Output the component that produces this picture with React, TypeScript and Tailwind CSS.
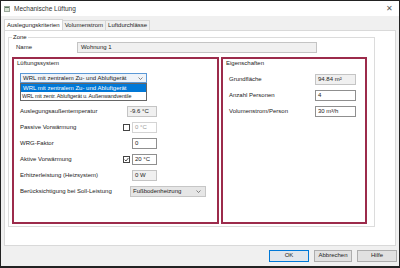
import React from "react";

const font = { fontFamily: '"Liberation Sans", Arial, sans-serif' };

function Input({ value, gray, disabled, w }: { value: string; gray?: boolean; disabled?: boolean; w: string }) {
  const cls = gray
    ? "bg-[#f0f0f0] border-[#c4c4c4] text-[#222]"
    : disabled
    ? "bg-white border-[#d4d4d4] text-[#9a9a9a]"
    : "bg-white border-[#8f8f8f] text-[#222]";
  return (
    <div className={`${w} h-[11px] border ${cls} flex items-center pl-[2px] leading-none whitespace-nowrap`}>{value}</div>
  );
}

function Check({ checked }: { checked?: boolean }) {
  return (
    <div className="w-[7px] h-[7px] border border-[#444] bg-white flex items-center justify-center">
      {checked && (
        <svg width="5" height="5" viewBox="0 0 5 5">
          <path d="M0.6 2.6 L2 4 L4.4 1" stroke="#222" strokeWidth="0.8" fill="none" />
        </svg>
      )}
    </div>
  );
}

function Chevron() {
  return (
    <svg width="5" height="3" viewBox="0 0 5 3">
      <path d="M0.5 0.5 L2.5 2.5 L4.5 0.5" stroke="#555" strokeWidth="0.7" fill="none" />
    </svg>
  );
}

export default function App() {
  return (
    <div
      className="w-[400px] h-[268px] border border-[#222] border-b-2 bg-[#f0f0f0] flex flex-col text-[6px] text-[#222] overflow-hidden"
      style={font}
    >
      {/* Title bar */}
      <div className="h-[15px] bg-white flex items-center pl-[3px] pr-[6px] flex-none">
        <svg width="6" height="6" viewBox="0 0 6 6" className="mr-[4px]">
          <rect x="0" y="0" width="6" height="6" fill="#9aa79a" />
          <rect x="1" y="1" width="4" height="4" fill="#d8e2d4" />
          <rect x="1" y="1" width="4" height="1" fill="#5d7a62" />
        </svg>
        <span className="text-[6.5px] text-[#333]">Mechanische Lüftung</span>
        <span className="ml-auto text-[8px] text-[#555] leading-none">✕</span>
      </div>

      {/* Tabs */}
      <div className="h-[14px] flex items-end pl-[3px] flex-none">
        <div className="h-[11px] bg-white border border-b-0 border-[#d6d6d6] px-[2px] flex items-center">Auslegungskriterien</div>
        <div className="h-[10px] px-[2px] flex items-center border-t border-r border-[#d6d6d6] bg-[#f0f0f0]">Volumenstrom</div>
        <div className="h-[10px] px-[2px] flex items-center border-t border-r border-[#d6d6d6] bg-[#f0f0f0]">Luftdurchlässe</div>
      </div>

      {/* Tab page */}
      <div className="h-[216px] mx-[3px] bg-white border border-[#d9d9d9] flex-none">
        <fieldset className="ml-[3px] mt-[3px] w-[367px] h-[193px] border border-[#dcdcdc] px-0 pb-[3px]">
          <legend className="ml-[3px] px-[1px] leading-[7px]">Zone</legend>
          <div className="flex items-center h-[11px] mt-[1px]">
            <span className="w-[68px] pl-[7px]">Name</span>
            <div className="w-[240px] h-[11px] bg-[#f0f0f0] border border-[#c4c4c4] flex items-center pl-[3px]">Wohnung 1</div>
          </div>
          <div className="flex gap-[2px] mt-[4px] pl-[3px]">
            {/* Left box */}
            <div className="w-[207px] h-[167px] border-2 border-[#9c2b4b] relative">
              <div className="pl-[3px] mt-[1px] leading-[7px]">Lüftungssystem</div>
              <div className="ml-[6px] mt-[6px] w-[127px] relative">
                <div className="h-[10px] bg-[#eef3f9] border border-[#5a98d6] flex items-center pl-[2px] pr-[3px] whitespace-nowrap">
                  <span>WRL mit zentralem Zu- und Abluftgerät</span>
                  <span className="ml-auto flex"><Chevron /></span>
                </div>
                <div className="absolute left-0 top-[10px] w-[127px] bg-white border border-[#666] z-10 whitespace-nowrap overflow-hidden">
                  <div className="h-[8px] bg-[#0078d7] text-white flex items-center pl-[2px]">WRL mit zentralem Zu- und Abluftgerät</div>
                  <div className="h-[8px] flex items-center pl-[1px] text-[5.4px] tracking-[-0.1px]">WRL mit zentr. Abluftgerät u. Außenwandventile</div>
                </div>
              </div>
              <div className="mt-[20px] pl-[6px] flex flex-col whitespace-nowrap">
                <div className="h-[16px] flex items-center">
                  <span className="w-[103px]">Auslegungsaußentemperatur</span>
                  <div className="w-[34px] flex justify-end"><Input value="-9.6 °C" gray w="w-[30px]" /></div>
                </div>
                <div className="h-[16px] flex items-center">
                  <span className="w-[103px]">Passive Vorwärmung</span>
                  <div className="w-[34px] flex items-center justify-between"><Check /><Input value="0 °C" disabled w="w-[25px]" /></div>
                </div>
                <div className="h-[16px] flex items-center">
                  <span className="w-[103px]">WRG-Faktor</span>
                  <div className="w-[34px] flex justify-end"><Input value="0" w="w-[25px]" /></div>
                </div>
                <div className="h-[16px] flex items-center">
                  <span className="w-[103px]">Aktive Vorwärmung</span>
                  <div className="w-[34px] flex items-center justify-between"><Check checked /><Input value="20 °C" w="w-[25px]" /></div>
                </div>
                <div className="h-[16px] flex items-center">
                  <span className="w-[103px]">Erhitzerleistung (Heizsystem)</span>
                  <div className="w-[34px] flex justify-end"><Input value="0 W" gray w="w-[25px]" /></div>
                </div>
                <div className="h-[16px] flex items-center">
                  <span className="w-[110px]">Berücksichtigung bei Soll-Leistung</span>
                  <div className="w-[76px] h-[11px] bg-[#e6e6e6] border border-[#c6c6c6] flex items-center pl-[2px] pr-[4px]">
                    <span>Fußbodenheizung</span>
                    <span className="ml-auto flex"><Chevron /></span>
                  </div>
                </div>
              </div>
            </div>
            {/* Right box */}
            <div className="w-[146px] h-[167px] border-2 border-[#9c2b4b] whitespace-nowrap">
              <div className="pl-[3px] mt-[1px] leading-[7px]">Eigenschaften</div>
              <div className="mt-[4px] pl-[6px] flex flex-col">
                <div className="h-[16px] flex items-center">
                  <span className="w-[86px]">Grundfläche</span>
                  <Input value="94.84 m²" gray w="w-[41px]" />
                </div>
                <div className="h-[16px] flex items-center">
                  <span className="w-[86px]">Anzahl Personen</span>
                  <Input value="4" w="w-[41px]" />
                </div>
                <div className="h-[16px] flex items-center">
                  <span className="w-[86px]">Volumenstrom/Person</span>
                  <Input value="30 m³/h" w="w-[41px]" />
                </div>
              </div>
            </div>
          </div>
        </fieldset>
      </div>

      {/* Footer */}
      <div className="flex-1 flex items-center justify-end gap-[5px] pr-[2px] pb-[1px]">
        <div className="w-[40px] h-[12px] border border-[#0078d7] bg-[#e1e6ec] flex items-center justify-center">OK</div>
        <div className="w-[38px] h-[12px] border border-[#adadad] bg-[#e1e1e1] flex items-center justify-center">Abbrechen</div>
        <div className="w-[40px] h-[12px] border border-[#adadad] bg-[#e1e1e1] flex items-center justify-center">Hilfe</div>
      </div>
    </div>
  );
}
